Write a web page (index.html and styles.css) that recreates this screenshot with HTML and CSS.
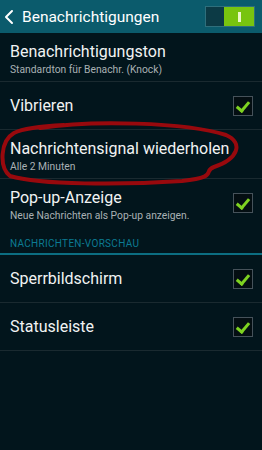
FILE: index.html
```html
<!DOCTYPE html>
<html lang="de">
<head>
  <meta charset="UTF-8" />
  <meta name="viewport" content="width=device-width, initial-scale=1.0"/>
  <title>Benachrichtigungen</title>
  <link rel="stylesheet" href="styles.css">
</head>
<body>
  <header class="topbar">
    <svg class="back" width="10" height="16" viewBox="0 0 10 16">
      <path d="M8 2 L2 8 L8 14" fill="none" stroke="#fff" stroke-width="2" stroke-linecap="round" stroke-linejoin="round"/>
    </svg>
    <h1>Benachrichtigungen</h1>
    <div class="switch">
      <span class="switch-off"></span>
      <span class="switch-on"><i></i></span>
    </div>
  </header>

  <div class="screen">
    <ul class="list">
      <li class="item sub">
        <div class="text">
          <div class="title">Benachrichtigungston</div>
          <div class="desc">Standardton für Benachr. (Knock)</div>
        </div>
      </li>
      <li class="item">
        <div class="text"><div class="title">Vibrieren</div></div>
        <span class="check"></span>
      </li>
      <li class="item sub">
        <div class="text">
          <div class="title">Nachrichtensignal wiederholen</div>
          <div class="desc">Alle 2 Minuten</div>
        </div>
      </li>
      <li class="item sub last">
        <div class="text">
          <div class="title">Pop-up-Anzeige</div>
          <div class="desc">Neue Nachrichten als Pop-up anzeigen.</div>
        </div>
        <span class="check"></span>
      </li>
    </ul>

    <div class="section">NACHRICHTEN-VORSCHAU</div>

    <ul class="list">
      <li class="item">
        <div class="text"><div class="title">Sperrbildschirm</div></div>
        <span class="check"></span>
      </li>
      <li class="item">
        <div class="text"><div class="title">Statusleiste</div></div>
        <span class="check"></span>
      </li>
    </ul>

    <!-- hand drawn marker around the repeat option -->
    <svg class="marker" width="262" height="70" viewBox="0 0 262 70">
      <path d="M40 7 C90 -1 185 1 226 14 C244 22 238 38 214 46 C202 50 220 56 182 60 C122 64 40 64 10 55 C-1 46 0 20 14 12 C24 7 44 5 64 4"
        fill="none" stroke="#a8080c" stroke-width="4" stroke-linecap="round" opacity="0.9"/>
    </svg>
  </div>
</body>
</html>
```

FILE: styles.css
```css
body {
  margin: 0;
  padding: 0;
  background-color: #02151c;
  font-family: Roboto, "Liberation Sans", sans-serif;
  color: #f1f3f3;
}
.topbar {
  height: 33px;
  background-color: #0b5b6c;
  display: flex;
  align-items: center;
  padding: 0 7px 0 4px;
}
.back {
  margin-right: 8px;
}
.topbar h1 {
  flex: 1;
  margin: 0;
  font-size: 15.5px;
  font-weight: normal;
  color: #fff;
}
.switch {
  display: flex;
  width: 48px;
  height: 19px;
  border: 1px solid #2f6f7c;
}
.switch-off {
  width: 18px;
  background-color: #0c3a45;
}
.switch-on {
  flex: 1;
  background-color: #78c40f;
  display: flex;
  align-items: center;
  justify-content: center;
}
.switch-on i {
  width: 3px;
  height: 10px;
  background-color: #eaf7c8;
}
.screen {
  position: relative;
}
.list {
  list-style: none;
  margin: 0;
  padding: 0;
}
.item {
  display: flex;
  align-items: center;
  height: 47px;
  padding: 0 9px 0 10px;
  border-bottom: 1px solid #1a2a30;
}
.item.sub {
  height: 48px;
  align-items: flex-start;
}
.item.sub .text {
  padding-top: 9px;
}
.item.sub .check {
  align-self: center;
}
.item.last {
  border-bottom: none;
}
.text {
  flex: 1;
}
.title {
  font-size: 16px;
  line-height: 20px;
}
.desc {
  margin-top: 1px;
  font-size: 10.3px;
  line-height: 13px;
  color: #a9b1b4;
}
.check {
  position: relative;
  width: 18px;
  height: 18px;
  border: 1px solid #46525a;
  background-color: #040e12;
}
.check::after {
  content: "";
  position: absolute;
  left: 5px;
  top: 2px;
  width: 5px;
  height: 10px;
  border-right: 3px solid #7ed321;
  border-bottom: 3px solid #7ed321;
  transform: rotate(40deg);
}
.section {
  padding: 11px 10px 3px;
  font-size: 10px;
  line-height: 12px;
  letter-spacing: 0.3px;
  color: #0c7b93;
  border-bottom: 2px solid #0c6e82;
}
.marker {
  position: absolute;
  left: 0;
  top: 88px;
}
```
